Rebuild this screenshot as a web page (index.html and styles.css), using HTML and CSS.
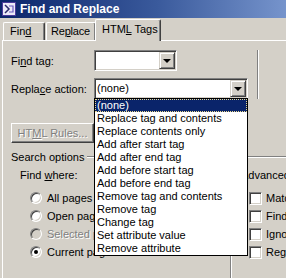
FILE: index.html
```html
<!DOCTYPE html>
<html lang="en">
  <head>
    <meta charset="UTF-8" />
    <meta name="viewport" content="width=device-width, initial-scale=1.0" />
    <title>Find and Replace</title>
    <link rel="stylesheet" href="styles.css">
  </head>
  <body>
    <div class="dialog">
      <div class="titlebar">
        <svg class="app-icon" width="14" height="14" viewBox="0 0 14 14">
          <rect x="0.5" y="0.5" width="13" height="13" fill="#eceaf8" stroke="#4b3a9a" />
          <path d="M3 3 L7 7 L3 11" fill="none" stroke="#2a2a6a" stroke-width="1.5" />
          <path d="M7 4 L11 4 L11 10 L7 10" fill="none" stroke="#6a5ac0" stroke-width="1.2" />
        </svg>
        <span class="title">Find and Replace</span>
      </div>

      <div class="tabs">
        <div class="tab tab-find">Fin<u>d</u></div>
        <div class="tab tab-replace">Re<u>p</u>lace</div>
        <div class="tab tab-html active">HTM<u>L</u> Tags</div>
      </div>

      <div class="panel">
        <div class="top-area">
          <div class="fields">
            <div class="field-row">
              <span class="field-label">Fi<u>n</u>d tag:</span>
              <div class="combo combo-short">
                <div class="combo-text"></div>
                <div class="combo-btn"><span class="arrow"></span></div>
              </div>
            </div>
            <div class="field-row">
              <span class="field-label">Repla<u>c</u>e action:</span>
              <div class="combo combo-long">
                <div class="combo-text">(none)</div>
                <div class="combo-btn"><span class="arrow"></span></div>
              </div>
            </div>
          </div>
          <div class="vsep"></div>
        </div>

        <div class="btn disabled">HT<u>M</u>L Rules...</div>

        <div class="group">
          <div class="group-title"><span>Search options</span></div>
          <div class="group-body">
            <div class="where">
              <div class="sub-label">Find <u>w</u>here:</div>
              <div class="opt-row"><span class="radio"></span>All pages</div>
              <div class="opt-row"><span class="radio"></span>Open pages</div>
              <div class="opt-row disabled"><span class="radio"></span>Selected pages</div>
              <div class="opt-row"><span class="radio checked"></span>Current page</div>
            </div>
            <div class="divider"></div>
            <div class="advanced">
              <div class="sub-label">Advanced</div>
              <div class="opt-row"><span class="check"></span>Match case</div>
              <div class="opt-row"><span class="check"></span>Find whole word</div>
              <div class="opt-row"><span class="check"></span>Ignore whitespace</div>
              <div class="opt-row"><span class="check"></span>Regular expressions</div>
            </div>
          </div>
        </div>
      </div>

      <!-- open dropdown of the Replace action combo -->
      <ul class="droplist">
        <li class="selected"><span>(none)</span></li>
        <li>Replace tag and contents</li>
        <li>Replace contents only</li>
        <li>Add after start tag</li>
        <li>Add after end tag</li>
        <li>Add before start tag</li>
        <li>Add before end tag</li>
        <li>Remove tag and contents</li>
        <li>Remove tag</li>
        <li>Change tag</li>
        <li>Set attribute value</li>
        <li>Remove attribute</li>
      </ul>
    </div>
  </body>
</html>
```

FILE: styles.css
```css
body {
  margin: 0;
  background-color: #d4d0c8;
  font-family: 'Liberation Sans', Arial, sans-serif;
  font-size: 11px;
  color: #000;
}

.dialog {
  width: 286px;
  height: 278px;
  position: relative;
  overflow: hidden;
  background-color: #d4d0c8;
}

.titlebar {
  height: 18px;
  display: flex;
  align-items: center;
  gap: 4px;
  padding-left: 2px;
  background: linear-gradient(to right, #0a246a 0%, #3a5a9c 55%, #7694cc 100%);
}

.app-icon {
  flex: none;
}

.title {
  color: #fff;
  font-weight: bold;
  font-size: 12px;
  line-height: 18px;
}

.tabs {
  height: 22px;
  display: flex;
  align-items: flex-end;
  padding-left: 3px;
}

.tab {
  box-sizing: border-box;
  flex: none;
  height: 18px;
  line-height: 16px;
  padding-left: 6px;
  white-space: nowrap;
  border-top: 1px solid #fff;
  border-left: 1px solid #fff;
  border-right: 1px solid #404040;
  box-shadow: inset -1px 0 #808080;
  border-radius: 2px 2px 0 0;
}

.tab-find {
  width: 42px;
}

.tab-replace {
  width: 50px;
  margin-left: 1px;
  padding-left: 4px;
  letter-spacing: -0.2px;
}

.tab-html {
  width: 66px;
  margin-left: -1px;
}

.tab.active {
  height: 22px;
  margin-bottom: -1px;
  line-height: 19px;
  position: relative;
  z-index: 1;
  background-color: #d4d0c8;
}

.panel {
  margin-left: 2px;
  height: 240px;
  border-top: 1px solid #fff;
  border-left: 1px solid #fff;
  padding-left: 8px;
}

.top-area {
  display: flex;
  padding-top: 9px;
}

.fields {
  width: 237px;
  flex: none;
  display: flex;
  flex-direction: column;
  gap: 7px;
}

.field-row {
  display: flex;
  align-items: center;
  height: 21px;
}

.field-label {
  width: 83px;
  flex: none;
}

.combo {
  box-sizing: border-box;
  height: 21px;
  display: flex;
  border: 1px solid;
  border-color: #808080 #fff #fff #808080;
  box-shadow: inset 1px 1px #404040, inset -1px -1px #d4d0c8;
  background-color: #fff;
  padding: 1px;
}

.combo-short {
  width: 83px;
}

.combo-long {
  width: 154px;
}

.combo-text {
  flex: 1;
  line-height: 17px;
  padding-left: 1px;
}

.combo-btn {
  box-sizing: border-box;
  width: 16px;
  height: 17px;
  background-color: #d4d0c8;
  border: 1px solid;
  border-color: #d4d0c8 #404040 #404040 #d4d0c8;
  box-shadow: inset 1px 1px #fff, inset -1px -1px #808080;
  display: flex;
  align-items: center;
  justify-content: center;
}

.arrow {
  width: 0;
  height: 0;
  border-left: 4px solid transparent;
  border-right: 4px solid transparent;
  border-top: 4px solid #000;
  margin-top: 1px;
}

.vsep {
  width: 0;
  height: 49px;
  margin-left: 9px;
  border-left: 1px solid #808080;
  border-right: 1px solid #fff;
}

.btn {
  box-sizing: border-box;
  width: 83px;
  height: 20px;
  margin-top: 24px;
  border: 1px solid;
  border-color: #fff #404040 #404040 #fff;
  box-shadow: inset -1px -1px #808080;
  text-align: center;
  line-height: 18px;
}

.disabled {
  color: #808080;
  text-shadow: 1px 1px #fff;
}

.group {
  margin-top: 7px;
  margin-left: -8px;
}

.group-title {
  display: flex;
  align-items: center;
  padding-left: 8px;
  height: 13px;
}

.group-title::after {
  content: '';
  flex: 1;
  height: 0;
  margin-left: 3px;
  border-top: 1px solid #808080;
  border-bottom: 1px solid #fff;
}

.group-body {
  display: flex;
}

.where {
  width: 227px;
  flex: none;
  padding-left: 8px;
  box-sizing: border-box;
}

.sub-label {
  margin-top: 6px;
  height: 13px;
  line-height: 13px;
  padding-left: 9px;
  margin-bottom: 7px;
  white-space: nowrap;
}

.opt-row {
  display: flex;
  align-items: center;
  height: 18px;
  padding-left: 19px;
  white-space: nowrap;
}

.radio {
  box-sizing: border-box;
  flex: none;
  width: 12px;
  height: 12px;
  margin-right: 5px;
  border-radius: 50%;
  border: 1px solid;
  border-color: #808080 #fff #fff #808080;
  box-shadow: inset 1px 1px #404040, inset -1px -1px #d4d0c8;
  background-color: #fff;
  display: flex;
  align-items: center;
  justify-content: center;
}

.radio.checked::after {
  content: '';
  width: 4px;
  height: 4px;
  border-radius: 50%;
  background-color: #000;
}

.opt-row.disabled .radio {
  background-color: #d4d0c8;
}

.divider {
  flex: none;
  width: 0;
  height: 124px;
  margin-top: -6px;
  border-left: 1px solid #808080;
  border-right: 1px solid #fff;
}

.advanced {
  flex: 1;
  min-width: 0;
  overflow: hidden;
  padding-left: 9px;
}

.advanced .sub-label {
  padding-left: 0;
}

.advanced .opt-row {
  padding-left: 8px;
}

.check {
  box-sizing: border-box;
  flex: none;
  width: 13px;
  height: 13px;
  margin-right: 4px;
  border: 1px solid;
  border-color: #808080 #fff #fff #808080;
  box-shadow: inset 1px 1px #404040, inset -1px -1px #d4d0c8;
  background-color: #fff;
}

.droplist {
  position: absolute;
  left: 94px;
  top: 98px;
  z-index: 2;
  box-sizing: border-box;
  width: 154px;
  height: 158px;
  margin: 0;
  padding: 0;
  list-style: none;
  background-color: #fff;
  border: 1px solid #000;
}

.droplist li {
  height: 13px;
  line-height: 13px;
  padding-left: 2px;
  white-space: nowrap;
}

.droplist li.selected {
  padding-left: 0;
  background-color: #0a246a;
  color: #fff;
}

.droplist li.selected span {
  display: block;
  height: 11px;
  line-height: 11px;
  padding-left: 1px;
  border: 1px dotted #e8d890;
}
```
